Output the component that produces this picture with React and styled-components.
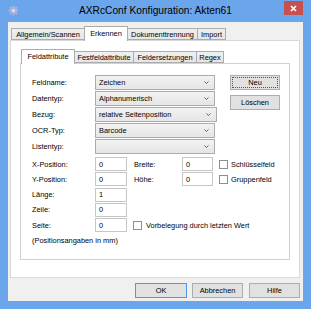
import React from 'react';
import styled, { createGlobalStyle } from 'styled-components';

const Global = createGlobalStyle`
  html, body { margin: 0; padding: 0; }
  body {
    width: 311px; height: 309px; overflow: hidden;
    font-family: "Liberation Sans", Arial, sans-serif;
    color: #000;
  }
`;

const Window = styled.div`
  width: 311px; height: 309px; box-sizing: border-box;
  background: #6ba5ec;
  display: flex; flex-direction: column;
  padding: 0 8px 8px 8px;
`;

const TitleBar = styled.div`
  height: 22px; margin: 0 -8px;
  display: grid; grid-template-columns: 1fr auto 1fr;
  padding: 0 8px; box-sizing: border-box;
`;

const TitleIcon = styled.div`
  align-self: center; justify-self: start;
  display: flex; margin-top: -1px;
`;

const TitleText = styled.div`
  align-self: center;
  font-size: 10.2px; line-height: 12px; color: #000;
  margin-top: -1px;
`;

const CloseButton = styled.div`
  justify-self: end; align-self: start;
  width: 19px; height: 14px; margin-top: 1px;
  background: #c75050;
  display: flex; align-items: center; justify-content: center;
`;

const Client = styled.div`
  flex: 1; background: #f0f0f0;
  display: flex; flex-direction: column;
  padding: 4px 3px 3px 2px;
`;

const TabStrip = styled.div`
  display: flex; align-items: flex-end;
  height: ${p => p.$h}px; padding-left: 1px;
  position: relative; z-index: 1;
`;

const Tab = styled.div`
  box-sizing: border-box;
  width: ${p => p.$w}px;
  height: ${p => (p.$active ? 15 : 12)}px;
  margin-bottom: ${p => (p.$active ? -1 : 0)}px;
  margin-left: ${p => (p.$first ? 0 : -1)}px;
  border: 1px solid #acacac;
  border-bottom: ${p => (p.$active ? 'none' : '1px solid #acacac')};
  background: ${p => (p.$active ? '#fff' : 'linear-gradient(#f0f0f0, #e5e5e5)')};
  display: flex; align-items: center; justify-content: center;
  padding-bottom: ${p => (p.$active ? 2 : 0)}px;
  font-size: 7.4px; white-space: nowrap;
  position: relative; z-index: ${p => (p.$active ? 2 : 1)};
`;

const OuterPanel = styled.div`
  box-sizing: border-box; height: 238px;
  background: #fff; border: 1px solid #d9d9d9;
  display: flex; flex-direction: column;
  padding: 7px 9px 17px 9px;
`;

const InnerPanel = styled.div`
  flex: 1; box-sizing: border-box;
  border: 1px solid #d2d2d2; background: #fff;
  padding: 11px 0 0 11px;
  display: flex; flex-direction: column;
`;

const TopSection = styled.div`
  display: flex; align-items: flex-start;
`;

const ComboColumn = styled.div`
  display: flex; flex-direction: column; gap: 1px;
`;

const ButtonColumn = styled.div`
  display: flex; flex-direction: column; gap: 5px;
  margin-left: 13px;
`;

const Row = styled.div`
  display: flex; align-items: center;
  height: ${p => p.$h}px;
`;

const Label = styled.div`
  width: ${p => p.$w}px; flex: none;
  font-size: 7.4px; white-space: nowrap;
  margin-left: ${p => p.$ml || 0}px;
`;

const Combo = styled.div`
  box-sizing: border-box; height: 15px;
  width: ${p => p.$w}px;
  border: 1px solid #acacac;
  background: linear-gradient(#f2f2f2, #e5e5e5);
  display: flex; align-items: center; justify-content: space-between;
  padding: 0 5px 0 3px;
  font-size: 7.4px; white-space: nowrap;
`;

const LowerSection = styled.div`
  display: flex; flex-direction: column; gap: 1.25px;
  margin-top: 3px;
`;

const TextInput = styled.div`
  box-sizing: border-box; height: 14px;
  width: ${p => p.$w}px;
  border: 1px solid #c6c6c6; background: #fff;
  display: flex; align-items: center; padding-left: 3px;
  font-size: 7.4px;
`;

const CheckBox = styled.div`
  box-sizing: border-box; width: 9px; height: 9px; flex: none;
  border: 1px solid #8e8e8e; background: #fff;
  margin-left: ${p => p.$ml}px;
`;

const CheckLabel = styled.div`
  font-size: 7.4px; white-space: nowrap;
  margin-left: ${p => p.$ml}px;
`;

const Note = styled.div`
  font-size: 7.4px; line-height: 9px; margin-top: 4px;
`;

const Button = styled.div`
  box-sizing: border-box; height: 15px;
  width: ${p => p.$w}px;
  border: 1px solid ${p => (p.$default ? '#4c9be8' : '#adadad')};
  background: #e1e1e1;
  display: flex; align-items: center; justify-content: center;
  font-size: 7.4px; position: relative;
  margin-left: ${p => p.$ml || 0}px;
`;

const FocusRing = styled.div`
  position: absolute; inset: 1px;
  border: 1px dotted #555;
`;

const Footer = styled.div`
  display: flex; justify-content: flex-end;
  margin-top: 5px;
`;

const Chevron = () => (
  <svg width="5" height="3" viewBox="0 0 5 3">
    <path d="M0.5 0.5 L2.5 2.5 L4.5 0.5" fill="none" stroke="#555" strokeWidth="0.9" />
  </svg>
);

const Gear = () => (
  <svg width="11" height="11" viewBox="0 0 12 12">
    <g fill="#a9b1dc">
      <circle cx="6" cy="6" r="4" />
      {[0, 45, 90, 135].map(a => (
        <rect key={a} x="5" y="0.5" width="2" height="11" rx="0.5" transform={`rotate(${a} 6 6)`} />
      ))}
    </g>
    <circle cx="6" cy="6" r="1.7" fill="#dfe4f6" />
  </svg>
);

const CloseGlyph = () => (
  <svg width="7" height="7" viewBox="0 0 7 7">
    <path d="M1 1 L6 6 M6 1 L1 6" stroke="#fff" strokeWidth="1.6" />
  </svg>
);

const outerTabs = [
  ['Allgemein/Scannen', 74],
  ['Erkennen', 44, true],
  ['Dokumenttrennung', 71],
  ['Import', 29],
];

const innerTabs = [
  ['Feldattribute', 54, true],
  ['Festfeldattribute', 60],
  ['Feldersetzungen', 64],
  ['Regex', 28],
];

const combos = [
  ['Feldname:', 'Zeichen', 120],
  ['Datentyp:', 'Alphanumerisch', 120],
  ['Bezug:', 'relative Seitenposition', 122],
  ['OCR-Typ:', 'Barcode', 120],
  ['Listentyp:', '', 120],
];

export default function App() {
  return (
    <>
      <Global />
      <Window>
        <TitleBar>
          <TitleIcon><Gear /></TitleIcon>
          <TitleText>AXRcConf Konfiguration: Akten61</TitleText>
          <CloseButton><CloseGlyph /></CloseButton>
        </TitleBar>
        <Client>
          <TabStrip $h={14}>
            {outerTabs.map(([t, w, a], i) => (
              <Tab key={t} $w={w} $active={a} $first={i === 0}>{t}</Tab>
            ))}
          </TabStrip>
          <OuterPanel>
            <TabStrip $h={15}>
              {innerTabs.map(([t, w, a], i) => (
                <Tab key={t} $w={w} $active={a} $first={i === 0}>{t}</Tab>
              ))}
            </TabStrip>
            <InnerPanel>
              <TopSection>
                <ComboColumn>
                  {combos.map(([l, v, w]) => (
                    <Row key={l} $h={15}>
                      <Label $w={63}>{l}</Label>
                      <Combo $w={w}><span>{v}</span><Chevron /></Combo>
                    </Row>
                  ))}
                </ComboColumn>
                <ButtonColumn>
                  <Button $w={50}>Neu<FocusRing /></Button>
                  <Button $w={50}>Löschen</Button>
                </ButtonColumn>
              </TopSection>
              <LowerSection>
                <Row $h={14}>
                  <Label $w={63}>X-Position:</Label>
                  <TextInput $w={32}>0</TextInput>
                  <Label $w={48} $ml={7}>Breite:</Label>
                  <TextInput $w={31}>0</TextInput>
                  <CheckBox $ml={6} />
                  <CheckLabel $ml={3}>Schlüsselfeld</CheckLabel>
                </Row>
                <Row $h={14}>
                  <Label $w={63}>Y-Position:</Label>
                  <TextInput $w={32}>0</TextInput>
                  <Label $w={48} $ml={7}>Höhe:</Label>
                  <TextInput $w={31}>0</TextInput>
                  <CheckBox $ml={6} />
                  <CheckLabel $ml={3}>Gruppenfeld</CheckLabel>
                </Row>
                <Row $h={14}>
                  <Label $w={63}>Länge:</Label>
                  <TextInput $w={32}>1</TextInput>
                </Row>
                <Row $h={14}>
                  <Label $w={63}>Zeile:</Label>
                  <TextInput $w={32}>0</TextInput>
                </Row>
                <Row $h={14}>
                  <Label $w={63}>Seite:</Label>
                  <TextInput $w={32}>0</TextInput>
                  <CheckBox $ml={6} />
                  <CheckLabel $ml={4}>Vorbelegung durch letzten Wert</CheckLabel>
                </Row>
              </LowerSection>
              <Note>(Positionsangaben in mm)</Note>
            </InnerPanel>
          </OuterPanel>
          <Footer>
            <Button $w={52} $default>OK</Button>
            <Button $w={51} $ml={5}>Abbrechen</Button>
            <Button $w={51} $ml={6}>Hilfe</Button>
          </Footer>
        </Client>
      </Window>
    </>
  );
}
